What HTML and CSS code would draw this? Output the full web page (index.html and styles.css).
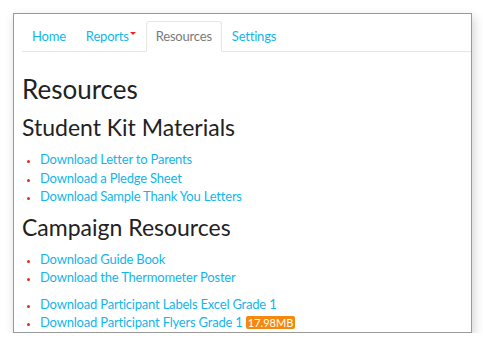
FILE: index.html
```html
<!DOCTYPE html>
<html lang="en">

<head>
    <meta charset="UTF-8">
    <meta name="viewport" content="width=device-width, initial-scale=1.0">
    <title>Resources</title>
    <link rel="stylesheet" href="styles.css">
</head>

<body>
    <div class="frame">
        <ul class="tabs">
            <li><a href="#">Home</a></li>
            <li><a href="#" class="dropdown">Reports<span class="caret"></span></a></li>
            <li class="active"><a href="#">Resources</a></li>
            <li><a href="#">Settings</a></li>
        </ul>

        <div class="content">
            <h1>Resources</h1>

            <h2>Student Kit Materials</h2>
            <ul class="links">
                <li><a href="#">Download Letter to Parents</a></li>
                <li><a href="#">Download a Pledge Sheet</a></li>
                <li><a href="#">Download Sample Thank You Letters</a></li>
            </ul>

            <h2>Campaign Resources</h2>
            <ul class="links">
                <li><a href="#">Download Guide Book</a></li>
                <li><a href="#">Download the Thermometer Poster</a></li>
            </ul>
            <ul class="links">
                <li><a href="#">Download Participant Labels Excel Grade 1</a></li>
                <li><a href="#">Download Participant Flyers Grade 1</a> <span class="badge">17.98MB</span></li>
            </ul>
        </div>
    </div>
</body>

</html>
```

FILE: styles.css
```css
body {
    margin: 0;
    background-color: #fff;
    font-family: Lato, "Open Sans", sans-serif;
}

.frame {
    margin: 13px 0 0 13px;
    width: 459px;
    height: 320px;
    box-sizing: border-box;
    border: 1px solid #999;
    box-shadow: 2px 4px 10px rgba(0, 0, 0, 0.18);
    padding: 7px 0 0 8px;
    overflow: hidden;
}

.tabs {
    display: flex;
    list-style: none;
    margin: 0;
    padding: 0;
    border-bottom: 1px solid #e6e6e6;
}

.tabs li {
    margin-bottom: -1px;
}

.tabs a {
    display: block;
    padding: 6px 9px 7px;
    font-size: 13px;
    letter-spacing: -0.2px;
    line-height: 16px;
    color: #13b5ea;
    text-decoration: none;
    border: 1px solid transparent;
    border-radius: 3px 3px 0 0;
}

.tabs .active a {
    color: #7a7a7a;
    background-color: #fff;
    border-color: #e6e6e6 #e6e6e6 #fff;
}

.caret {
    display: inline-block;
    vertical-align: top;
    margin: 4px 0 0 1px;
    border-top: 3px solid #e8291c;
    border-left: 3px solid transparent;
    border-right: 3px solid transparent;
}

.content {
    padding-top: 22px;
}

h1 {
    margin: 0 0 10px;
    font-size: 26px;
    font-weight: normal;
    line-height: 30px;
    color: #222;
}

h2 {
    margin: 0 0 10px;
    font-size: 23px;
    font-weight: normal;
    line-height: 26px;
    color: #222;
}

.links {
    margin: 0 0 8px;
    padding-left: 18px;
    font-size: 13px;
    letter-spacing: -0.2px;
    line-height: 18.5px;
}

.links li {
    color: #e8291c;
}

.links li::marker {
    font-size: 10px;
}

.links a {
    color: #13b5ea;
    text-decoration: none;
}

.badge {
    display: inline-block;
    padding: 0 2px;
    background-color: #f5890f;
    color: #fff;
    font-size: 11px;
    letter-spacing: 0;
    line-height: 13px;
    border-radius: 2px;
}
```
